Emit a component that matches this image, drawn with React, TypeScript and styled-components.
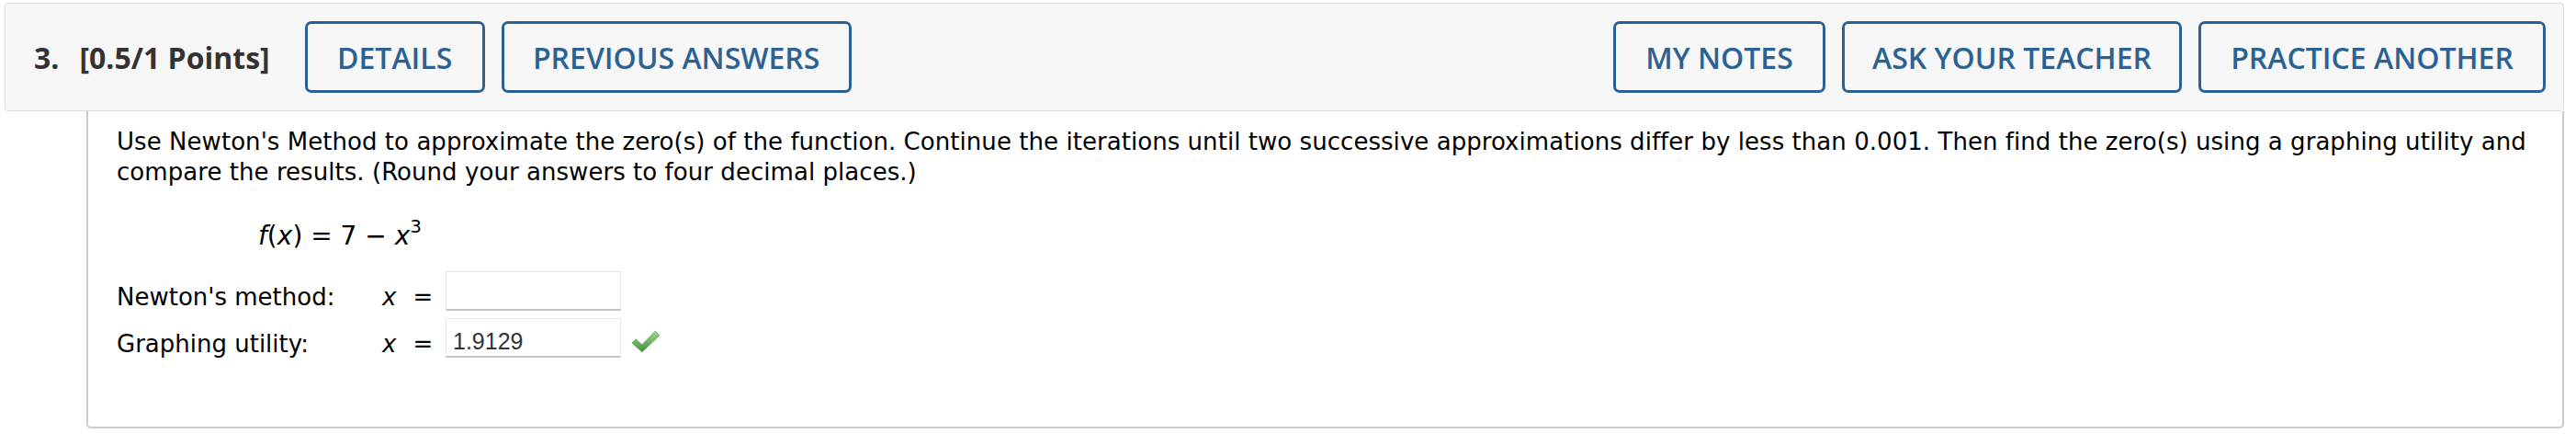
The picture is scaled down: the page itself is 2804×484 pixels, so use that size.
import styled, { createGlobalStyle } from 'styled-components';

const GlobalStyle = createGlobalStyle`
  html, body {
    margin: 0;
    padding: 0;
    background: #fff;
  }
`;

const StyledPage = styled.div`
  padding: 3px 13px 0 5px;
`;

const StyledHeader = styled.header`
  display: flex;
  align-items: center;
  height: 78px;
  padding: 19px 19px 19px 31px;
  background: #f7f7f7;
  border: 1px solid #dcdcdc;
  border-radius: 4px;
  font-family: 'Open Sans', sans-serif;
`;

const StyledTitle = styled.div`
  display: flex;
  gap: 22px;
  margin-right: 38px;
  font-size: 32px;
  font-weight: 700;
  color: #333;
`;

const StyledGroup = styled.div<{ $right?: boolean }>`
  display: flex;
  gap: 18px;
  margin-left: ${({ $right }) => ($right ? 'auto' : '0')};
`;

const StyledButton = styled.button<{ $width: number }>`
  box-sizing: border-box;
  width: ${({ $width }) => $width}px;
  height: 78px;
  padding: 0;
  background: #f7f7f7;
  border: 3px solid #2c6293;
  border-radius: 7px;
  color: #2c6293;
  font-family: 'Open Sans', sans-serif;
  font-size: 32px;
  font-weight: 600;
  white-space: nowrap;
`;

const StyledCard = styled.section`
  margin-left: 89px;
  height: 345px;
  box-sizing: border-box;
  padding: 17px 30px 0 31px;
  border: 2px solid #cbcbcb;
  border-top: none;
  border-radius: 0 0 5px 5px;
  font-family: Verdana, 'DejaVu Sans', sans-serif;
  font-size: 26px;
  color: #000;
`;

const StyledPrompt = styled.p`
  margin: 0;
  line-height: 33px;
  letter-spacing: 0.05px;
`;

const StyledFormula = styled.div`
  margin: 36px 0 0 154px;
  line-height: 33px;
  font-size: 28px;

  i {
    font-style: italic;
  }

  sup {
    font-size: 20px;
    line-height: 0;
    vertical-align: 13px;
  }
`;

const StyledAnswers = styled.div`
  display: grid;
  grid-template-columns: 289px 69px 191px auto;
  row-gap: 8px;
  align-items: end;
  margin-top: 22px;
`;

const StyledLabel = styled.div`
  line-height: 20px;
  padding-bottom: 5px;
`;

const StyledVar = styled.div`
  display: flex;
  gap: 18px;
  line-height: 20px;
  padding-bottom: 5px;

  i {
    font-style: italic;
  }
`;

const StyledInput = styled.input`
  box-sizing: border-box;
  width: 191px;
  height: 43px;
  margin: 0;
  padding: 8px 7px 0;
  border: 1px solid #e6e6e6;
  border-bottom: 2px solid #c4c4c4;
  background: #fff;
  font-family: 'Liberation Sans', Arial, sans-serif;
  font-size: 25px;
  color: #333;
  outline: none;
`;

const StyledCheck = styled.svg`
  display: block;
  margin: 0 0 5px 11px;
`;

function CheckIcon() {
  return (
    <StyledCheck width="32" height="25" viewBox="0 0 31 24">
      <defs>
        <linearGradient id="okGrad" x1="0" y1="0" x2="0" y2="1">
          <stop offset="0" stopColor="#a3d88e" />
          <stop offset="1" stopColor="#3f913f" />
        </linearGradient>
      </defs>
      <path
        d="M1 13.5 L5 9.5 L11.5 15.5 L25.5 1 L30 5.5 L11.5 23 Z"
        fill="url(#okGrad)"
        stroke="#4f9a4a"
        strokeWidth="0.8"
        strokeLinejoin="round"
      />
    </StyledCheck>
  );
}

export default function App() {
  return (
    <StyledPage>
      <GlobalStyle />
      <StyledHeader>
        <StyledTitle>
          <span>3.</span>
          <span>[0.5/1 Points]</span>
        </StyledTitle>
        <StyledGroup>
          <StyledButton $width={196}>DETAILS</StyledButton>
          <StyledButton $width={381}>PREVIOUS ANSWERS</StyledButton>
        </StyledGroup>
        <StyledGroup $right>
          <StyledButton $width={231}>MY NOTES</StyledButton>
          <StyledButton $width={370}>ASK YOUR TEACHER</StyledButton>
          <StyledButton $width={378}>PRACTICE ANOTHER</StyledButton>
        </StyledGroup>
      </StyledHeader>
      <StyledCard>
        <StyledPrompt>
          Use Newton's Method to approximate the zero(s) of the function. Continue the iterations until two
          successive approximations differ by less than 0.001. Then find the zero(s) using a graphing utility and
          compare the results. (Round your answers to four decimal places.)
        </StyledPrompt>
        <StyledFormula>
          <i>f</i>(<i>x</i>) = 7 − <i>x</i>
          <sup>3</sup>
        </StyledFormula>
        <StyledAnswers>
          <StyledLabel>Newton's method:</StyledLabel>
          <StyledVar>
            <i>x</i>
            <span>=</span>
          </StyledVar>
          <StyledInput defaultValue="" />
          <span />
          <StyledLabel>Graphing utility:</StyledLabel>
          <StyledVar>
            <i>x</i>
            <span>=</span>
          </StyledVar>
          <StyledInput defaultValue="1.9129" />
          <CheckIcon />
        </StyledAnswers>
      </StyledCard>
    </StyledPage>
  );
}
